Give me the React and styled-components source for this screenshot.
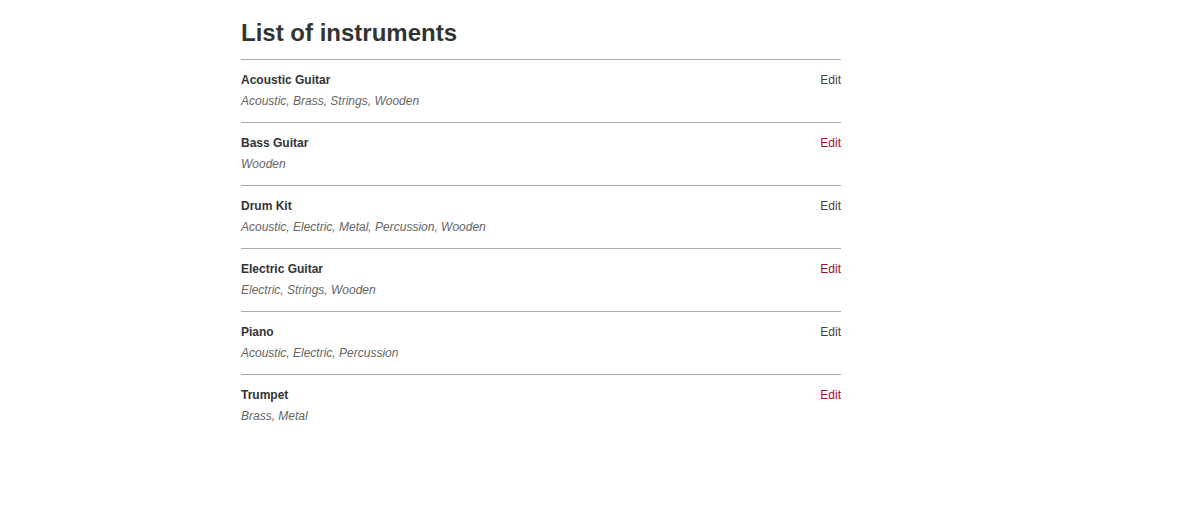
import styled, { createGlobalStyle } from 'styled-components';

const GlobalStyle = createGlobalStyle`
	body {
		margin: 0;
		background: #fff;
		font-family: "Liberation Sans", Arial, sans-serif;
		color: #333;
	}
`;

const instruments = [
	{ id: 1, name: 'Acoustic Guitar', tags: ['Acoustic', 'Brass', 'Strings', 'Wooden'] },
	{ id: 2, name: 'Bass Guitar', tags: ['Wooden'] },
	{ id: 3, name: 'Drum Kit', tags: ['Acoustic', 'Electric', 'Metal', 'Percussion', 'Wooden'] },
	{ id: 4, name: 'Electric Guitar', tags: ['Electric', 'Strings', 'Wooden'] },
	{ id: 5, name: 'Piano', tags: ['Acoustic', 'Electric', 'Percussion'] },
	{ id: 6, name: 'Trumpet', tags: ['Brass', 'Metal'] },
];

const Page = styled.div`
	padding: 19px 0 40px 241px;
`;

const Container = styled.div`
	width: 600px;
`;

const Title = styled.h1`
	margin: 0 0 12px;
	font-size: 24px;
	line-height: 28px;
	font-weight: bold;
	color: #333;
`;

const List = styled.ul`
	list-style: none;
	margin: 0;
	padding: 0;
`;

const Row = styled.li`
	display: flex;
	justify-content: space-between;
	align-items: flex-start;
	border-top: 1px solid #aaa;
	padding: 12px 0 13px;
`;

const Name = styled.div`
	font-size: 12px;
	line-height: 16px;
	font-weight: bold;
	color: #333;
`;

const Tags = styled.div`
	margin-top: 5px;
	font-size: 12px;
	line-height: 16px;
	font-style: italic;
	color: #666;
`;

const EditLink = styled.a`
	font-size: 12px;
	line-height: 16px;
	text-decoration: none;
	color: ${(p) => (p.$visited ? '#a0102a' : '#444')};
	cursor: pointer;
`;

export default function App() {
	return (
		<Page>
			<GlobalStyle />
			<Container>
				<Title>List of instruments</Title>
				<List>
					{instruments.map((item, i) => (
						<Row key={item.id}>
							<div>
								<Name>{item.name}</Name>
								<Tags>{item.tags.join(', ')}</Tags>
							</div>
							<EditLink $visited={i % 2 === 1}>Edit</EditLink>
						</Row>
					))}
				</List>
			</Container>
		</Page>
	);
}
